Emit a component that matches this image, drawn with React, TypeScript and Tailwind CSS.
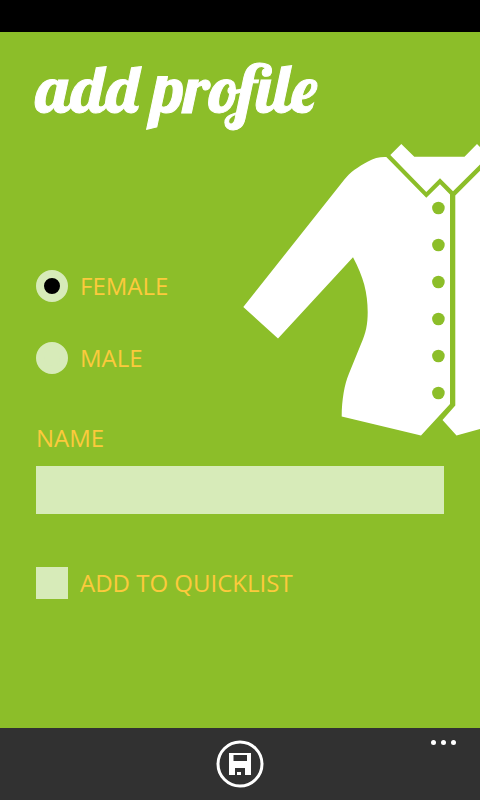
import { useState } from "react";

const BUTTON_ROWS = [208, 245, 282, 319, 356, 393];

function Shirt() {
  return (
    <svg
      aria-hidden="true"
      viewBox="240 140 240 300"
      className="pointer-events-none absolute top-[108px] right-0 h-[300px] w-[240px]"
    >
      <g fill="#fff">
        <path d="M386.3 157 426.3 197.7 440 184.3 450 194.5V404L421 435.5 341.7 416.5C341.7 400 344.5 384 349 373.5L361 344C366 333 367.7 324 367.7 312 367.7 293 363.5 277 353 257.3L278 338.5 243.3 307 344 180C350 172 358 167 368 161.5 374 158 380 156.7 386.3 157Z" />
        <path d="M390.3 155 401.3 144 414.3 156.7H464.5L477 144 480 147V164.5L453 191.3 440 178.3 426.3 192Z" />
        <path d="M455.3 195.5 480 170.8V429L456.5 435.5 442.5 420 455.3 405.5Z" />
      </g>
      <g fill="#8cbe29">
        {BUTTON_ROWS.map((y) => (
          <circle key={y} cx="438.4" cy={y} r="6.3" />
        ))}
      </g>
    </svg>
  );
}

function GenderOption({ value, label, selected, onSelect }: {
  value: string;
  label: string;
  selected: boolean;
  onSelect: (value: string) => void;
}) {
  return (
    <label className="flex items-center gap-3">
      <input
        type="radio"
        name="gender"
        value={value}
        checked={selected}
        onChange={() => onSelect(value)}
        className="size-8 appearance-none rounded-full border-8 border-[#d7ebb9] bg-[#d7ebb9] checked:bg-black"
      />
      {label}
    </label>
  );
}

export default function App() {
  const [gender, setGender] = useState("female");

  return (
    <div className="flex min-h-screen flex-col bg-[#8cbe29] font-['Open_Sans','Noto_Sans',sans-serif] text-2xl leading-8 text-[#fcca3d]">
      <div className="h-8 bg-black" />

      <main className="relative flex-1 overflow-hidden px-9 pt-5">
        <Shirt />
        <h1 className="relative font-['Lobster','Liberation_Serif',serif] text-[67px] leading-[72px] font-normal whitespace-nowrap text-white [-webkit-text-stroke:1px_white]">
          add profile
        </h1>

        <form className="relative flex flex-col pt-[146px]">
          <div className="flex flex-col items-start gap-10">
            <GenderOption value="female" label="FEMALE" selected={gender === "female"} onSelect={setGender} />
            <GenderOption value="male" label="MALE" selected={gender === "male"} onSelect={setGender} />
          </div>

          <label htmlFor="name" className="mt-12">NAME</label>
          <input
            id="name"
            type="text"
            className="mt-3 h-12 w-full bg-[#d7ebb9] px-3 text-black outline-none"
          />

          <label className="mt-[53px] flex items-center gap-3 self-start">
            <input
              type="checkbox"
              className="size-8 appearance-none border-8 border-[#d7ebb9] bg-[#d7ebb9] checked:bg-black"
            />
            ADD TO QUICKLIST
          </label>
        </form>
      </main>

      <footer className="grid h-[72px] grid-cols-3 bg-[#313131] text-white">
        <button type="button" aria-label="Save" className="col-start-2 size-12 place-self-center">
          <svg viewBox="0 0 48 48" className="size-12">
            <circle cx="24" cy="24" r="22" fill="none" stroke="#fff" strokeWidth="3" />
            <path
              fill="#fff"
              fillRule="evenodd"
              d="M13 13H35V35H29V28H19V35H13ZM17.5 15V21H31V15ZM21 32H25V35H21Z"
            />
          </svg>
        </button>
        <button type="button" aria-label="More" className="mr-6 flex h-7 items-center gap-[5px] self-start justify-self-end">
          <span className="size-[5px] rounded-full bg-white" />
          <span className="size-[5px] rounded-full bg-white" />
          <span className="size-[5px] rounded-full bg-white" />
        </button>
      </footer>
    </div>
  );
}
